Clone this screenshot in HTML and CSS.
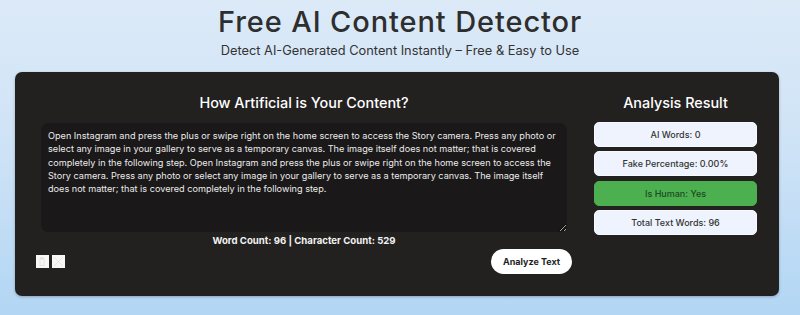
FILE: index.html
```html
<!DOCTYPE html>
<html lang="en">
<head>
<meta charset="utf-8">
<title>Free AI Content Detector</title>
<link rel="stylesheet" href="styles.css">
</head>
<body>
<header class="hero">
  <h1 class="hero-title">Free AI Content Detector</h1>
  <p class="hero-sub">Detect AI-Generated Content Instantly – Free &amp; Easy to Use</p>
</header>
<main class="card">
  <section class="input-col">
    <h2 class="col-title">How Artificial is Your Content?</h2>
    <textarea class="text-input" spellcheck="false">Open Instagram and press the plus or swipe right on the home screen to access the Story camera. Press any photo or select any image in your gallery to serve as a temporary canvas. The image itself does not matter; that is covered completely in the following step. Open Instagram and press the plus or swipe right on the home screen to access the Story camera. Press any photo or select any image in your gallery to serve as a temporary canvas. The image itself does not matter; that is covered completely in the following step.</textarea>
    <div class="counts">Word Count: 96 | Character Count: 529</div>
    <div class="actions">
      <div class="tools">
        <button class="tool" aria-label="Paste">
          <svg viewBox="0 0 13 13" width="13" height="13"><path d="M4 3.5h4v7H4z M5 2.5h2v1.5H5z" fill="none" stroke="#dcdcdc" stroke-width="0.8"/></svg>
        </button>
        <button class="tool" aria-label="Clear">
          <svg viewBox="0 0 13 13" width="13" height="13"><path d="M2 2l9 9M11 2l-9 9" stroke="#dedede" stroke-width="0.8"/></svg>
        </button>
      </div>
      <button class="analyze">Analyze Text</button>
    </div>
  </section>
  <aside class="result-col">
    <h2 class="col-title">Analysis Result</h2>
    <div class="results">
      <div class="result">AI Words: 0</div>
      <div class="result">Fake Percentage: 0.00%</div>
      <div class="result result-ok">Is Human: Yes</div>
      <div class="result">Total Text Words: 96</div>
    </div>
  </aside>
</main>
</body>
</html>
```

FILE: styles.css
```css
* { box-sizing: border-box; }

html, body { height: 100%; }

body {
  margin: 0;
  font-family: Inter, "Noto Sans", Arial, sans-serif;
  background: linear-gradient(180deg, #dceaf8 0%, #cfe3f6 45%, #b2d6f4 100%);
  color: #333;
  overflow: hidden;
}

.hero {
  text-align: center;
  padding-top: 5px;
  height: 72px;
}

.hero-title {
  margin: 0;
  font-size: 29px;
  line-height: 33px;
  font-weight: 500;
  letter-spacing: 0.9px;
  color: #2e2e2e;
}

.hero-sub {
  margin: 5px 0 0;
  font-size: 12.8px;
  line-height: 16px;
  color: #333;
}

.card {
  margin: 0 21px 0 15px;
  height: 224px;
  background: #232120;
  border-radius: 7px;
  padding: 20px 22px 22px 21px;
  display: grid;
  grid-template-columns: 1fr 163px;
  column-gap: 22px;
  box-shadow: 0 1px 3px rgba(0,0,0,0.25);
}

.input-col, .result-col {
  display: flex;
  flex-direction: column;
  min-width: 0;
}

.col-title {
  margin: 0 0 9px;
  font-size: 14.4px;
  line-height: 22px;
  font-weight: 500;
  color: #fff;
  text-align: center;
}

.text-input {
  display: block;
  margin: 0 5px;
  height: 109px;
  background: #1a1818;
  border: none;
  border-radius: 7px;
  padding: 6px 5px 6px 7px;
  font-family: inherit;
  font-size: 9.15px;
  line-height: 13.3px;
  color: #ececec;
  resize: vertical;
  outline: none;
}

.counts {
  text-align: center;
  font-size: 9.6px;
  font-weight: 700;
  line-height: 17px;
  color: #f2f2f2;
}

.actions {
  display: flex;
  justify-content: space-between;
  align-items: center;
  height: 25px;
}

.tools {
  display: flex;
  gap: 3px;
}

.tool {
  width: 13px;
  height: 13px;
  padding: 0;
  border: none;
  background: #f7f7f7;
  display: flex;
  align-items: center;
  justify-content: center;
}

.tool svg { display: block; }

.analyze {
  width: 81px;
  height: 25px;
  border: none;
  border-radius: 13px;
  background: #fff;
  color: #1e1e1e;
  font-family: inherit;
  font-size: 9px;
  font-weight: 700;
  padding: 0;
}

.results {
  display: flex;
  flex-direction: column;
  gap: 4.3px;
  margin-top: -1px;
}

.result {
  height: 25px;
  display: flex;
  align-items: center;
  justify-content: center;
  background: #eef3fd;
  border: 1px solid #f7f9fe;
  border-radius: 5px;
  font-size: 9px;
  font-weight: 500;
  color: #333;
}

.result-ok {
  background: #4caf50;
  border-color: #4caf50;
  color: #1d4a1f;
}
```
